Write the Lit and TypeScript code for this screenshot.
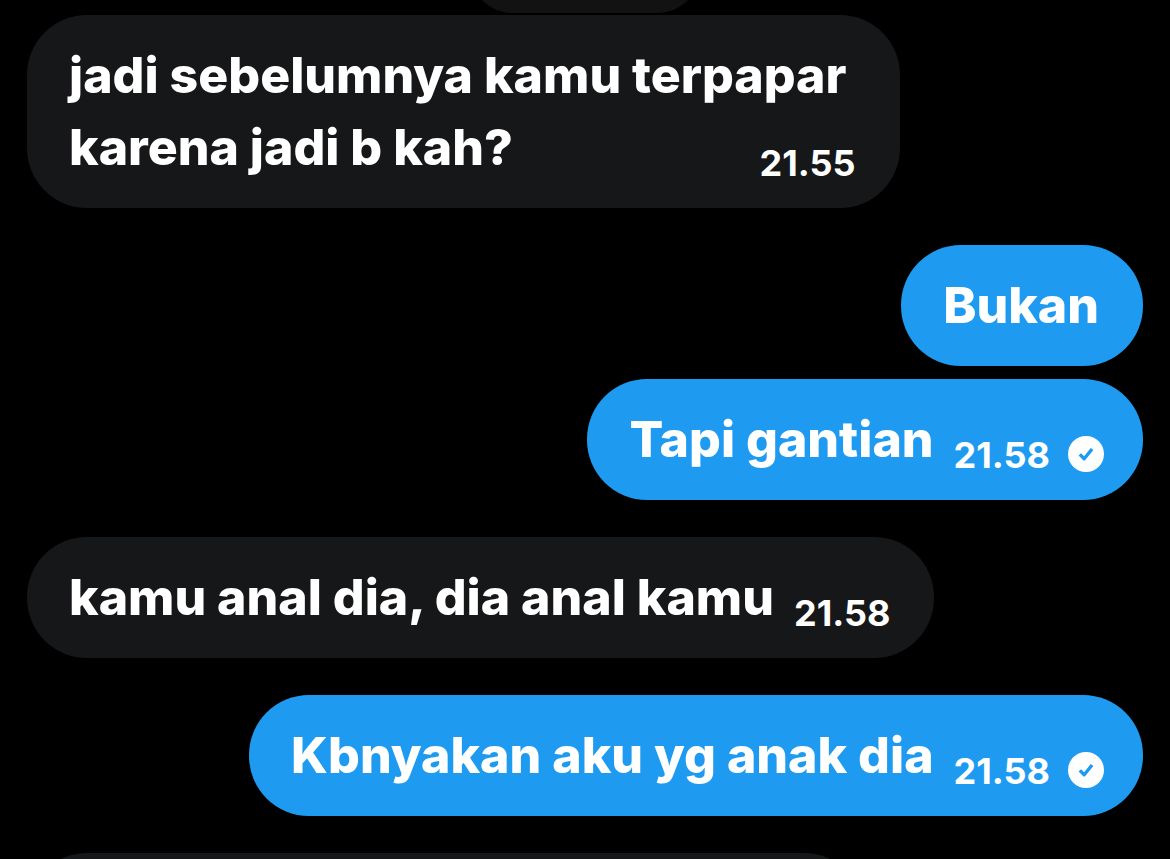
import { LitElement, html, css, nothing } from "lit";
import { customElement, property } from "lit/decorators.js";

@customElement("chat-bubble")
class ChatBubble extends LitElement {
  @property() text = "";
  @property() time = "";
  @property({ type: Boolean, reflect: true }) mine = false;

  static styles = css`
    :host {
      display: block;
      box-sizing: border-box;
      max-width: 84%;
      min-height: 121px;
      padding: 24px 44px 25px 42px;
      border-radius: 60px;
      background: #161719;
      color: #fff;
    }
    :host([mine]) {
      background: #1e9bf1;
    }
    .line {
      margin: 0;
      padding-right: 9px;
      font-size: 50px;
      line-height: 72px;
    }
    .last {
      display: flex;
      justify-content: space-between;
      gap: 20px;
      padding-right: 0;
    }
    .meta {
      display: flex;
      align-items: center;
      gap: 18px;
      padding-top: 30px;
      font-size: 36px;
      font-weight: 700;
      line-height: 40px;
    }
    .meta time {
      padding-top: 2px;
    }
    :host([mine]) .meta {
      margin-right: -5px;
    }
    .check {
      width: 36px;
      height: 36px;
    }
  `;

  private meta() {
    return html`<span class="meta">
      <time>${this.time}</time>
      ${this.mine
        ? html`<svg class="check" viewBox="0 0 36 36" role="img" aria-label="Terkirim">
            <circle cx="18" cy="18" r="18" fill="#fff"></circle>
            <path
              d="M11.8 18.4l4.4 4.4 7.9-9.8"
              fill="none"
              stroke="#1e9bf1"
              stroke-width="3.4"
              stroke-linejoin="round"
            ></path>
          </svg>`
        : nothing}
    </span>`;
  }

  render() {
    const lines = this.text.split("\n");
    return lines.map((line, i) =>
      i < lines.length - 1
        ? html`<p class="line">${line}</p>`
        : html`<p class="line last"><span>${line}</span>${this.time ? this.meta() : nothing}</p>`
    );
  }
}

@customElement("app-root")
class AppRoot extends LitElement {
  static styles = css`
    :host {
      display: block;
      height: 100vh;
      overflow: hidden;
      background: #000;
      font-family: Inter, "Liberation Sans", sans-serif;
      font-weight: 800;
    }
    .thread {
      display: flex;
      flex-direction: column;
      gap: 37px;
      padding: 0 27px;
    }
    .day {
      align-self: center;
      width: 232px;
      height: 88px;
      margin: -75px 0 -35px;
      border-radius: 44px;
      background: #121212;
    }
    .group {
      display: flex;
      flex-direction: column;
      align-items: flex-start;
      gap: 13px;
    }
    .own {
      align-items: flex-end;
    }
    .next {
      width: 75%;
    }
  `;

  render() {
    return html`<main class="thread">
      <div class="day"></div>
      <section class="group">
        <chat-bubble .text=${"jadi sebelumnya kamu terpapar\nkarena jadi b kah?"} time="21.55"></chat-bubble>
      </section>
      <section class="group own">
        <chat-bubble mine text="Bukan"></chat-bubble>
        <chat-bubble mine text="Tapi gantian" time="21.58"></chat-bubble>
      </section>
      <section class="group">
        <chat-bubble text="kamu anal dia, dia anal kamu" time="21.58"></chat-bubble>
      </section>
      <section class="group own">
        <chat-bubble mine text="Kbnyakan aku yg anak dia" time="21.58"></chat-bubble>
      </section>
      <section class="group">
        <chat-bubble class="next"></chat-bubble>
      </section>
    </main>`;
  }
}
